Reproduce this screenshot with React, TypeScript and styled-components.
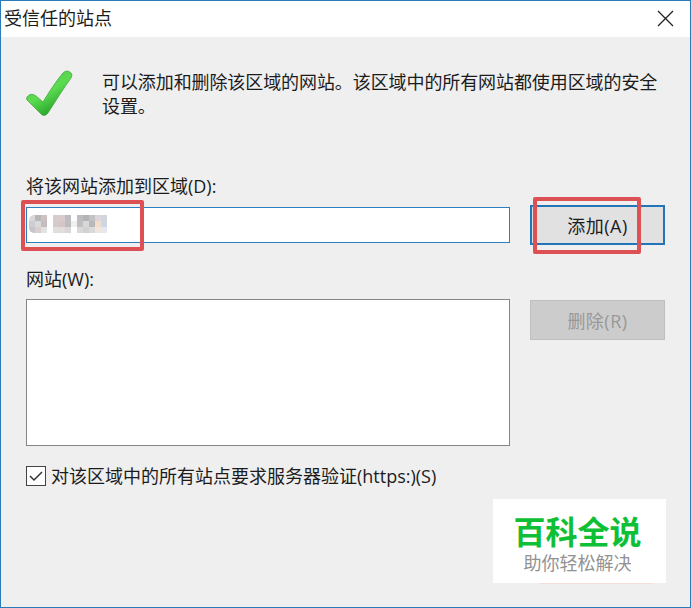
import React from 'react'
import styled, { createGlobalStyle } from 'styled-components'

interface ButtonProps {
  $primary?: boolean
}

interface MarkerProps {
  $left: number
  $top: number
  $width: number
  $height: number
}

const GlobalStyle = createGlobalStyle`
  * {
    box-sizing: border-box;
  }

  body {
    margin: 0;
    font-family: 'Open Sans', 'Noto Sans CJK SC', sans-serif;
    font-size: 18px;
    line-height: 24px;
    color: #1c1c1c;
  }
`

const Dialog = styled.div`
  position: relative;
  width: 691px;
  height: 608px;
  display: flex;
  flex-direction: column;
  background: #efefef;
  border: 1px solid #2b7bb9;
  overflow: hidden;
`

const TitleBar = styled.header`
  height: 36px;
  flex: none;
  display: flex;
  justify-content: space-between;
  align-items: center;
  padding: 0 16px 2px 3px;
  background: #fff;
`

const Title = styled.h1`
  margin: 0;
  font-size: 18px;
  font-weight: 400;
`

const CloseIcon = styled.svg`
  width: 17px;
  height: 17px;
`

const Content = styled.main`
  display: flex;
  flex-direction: column;
  padding: 33px 25px 0;
`

const Intro = styled.div`
  height: 104px;
  display: flex;
`

const CheckMark = styled.svg`
  width: 47px;
  height: 47px;
  margin-right: 29px;
`

const IntroText = styled.p`
  width: 562px;
  margin: 0;
  letter-spacing: -0.09px;
`

const Label = styled.label`
  height: 24px;
`

const FieldRow = styled.div`
  display: flex;
  gap: 20px;
  margin: 7px 0 22px;
`

const ListRow = styled.div`
  display: flex;
  gap: 20px;
  margin-top: 8px;
`

const Input = styled.div`
  width: 484px;
  height: 36px;
  margin-top: 2px;
  padding: 7px 2px;
  background: #fff;
  border: 1px solid #2b7fc0;
`

const Mosaic = styled.div`
  width: 78px;
  height: 18px;
  display: grid;
  grid-template-columns: repeat(13, 6px);
  grid-template-rows: repeat(3, 6px);
  border-radius: 5px 0 0 5px;
  overflow: hidden;
`

const MosaicCell = styled.span<{ $color: string }>`
  background: ${({ $color }) => $color};
`

const Button = styled.button<ButtonProps>`
  width: 135px;
  height: 40px;
  margin-top: ${({ $primary }) => ($primary ? 0 : '1px')};
  padding: 1px 0 0;
  font: inherit;
  letter-spacing: 0.5px;
  color: ${({ $primary }) => ($primary ? '#1c1c1c' : '#999')};
  background: ${({ $primary }) => ($primary ? '#e1e1e1' : '#ccc')};
  border: ${({ $primary }) => ($primary ? '2px solid #2474b8' : '1px solid #bfbfbf')};
`

const SiteList = styled.div`
  width: 484px;
  height: 147px;
  background: #fff;
  border: 1px solid #858585;
`

const CheckRow = styled.label`
  display: flex;
  align-items: center;
  gap: 5px;
  margin-top: 18px;
`

const CheckBox = styled.svg`
  width: 20px;
  height: 20px;
  background: #fff;
  border: 1px solid #444;
`

const Marker = styled.div<MarkerProps>`
  position: absolute;
  left: ${({ $left }) => $left}px;
  top: ${({ $top }) => $top}px;
  width: ${({ $width }) => $width}px;
  height: ${({ $height }) => $height}px;
  border: 4px solid #dd5054;
  border-radius: 2px;
`

const Watermark = styled.div`
  position: absolute;
  left: 492px;
  top: 498px;
  width: 173px;
  height: 84px;
  padding: 14px 4px 0 0;
  background: #fff;
  text-align: center;

  &::after {
    content: '';
    position: absolute;
    left: 47px;
    bottom: -1px;
    width: 113px;
    height: 1px;
    background: #f5ddd8;
  }
`

const Brand = styled.div`
  font-size: 32px;
  line-height: 38px;
  font-weight: 700;
  color: #0fbf35;
`

const Slogan = styled.div`
  font-size: 18px;
  line-height: 24px;
  color: #929292;
`

// blurred-out address, three rows of thirteen blocks
const mosaicRows = [
  ['#d9d9dc', '#b9b6b8', '#cfc0c1', '#fff', '#d6ccd0', '#d9cbcc', '#bcbcc2', '#fff', '#c0bcbf', '#b2b2b8', '#c2c2c5', '#dcd6da', '#d0d6de'],
  ['#cdcdd3', '#dadada', '#c6bdc0', '#fff', '#d2cccc', '#d8c4c4', '#bdbdbd', '#f0f0f0', '#bfbfc2', '#d8d8d8', '#b8b8bc', '#f2ddcd', '#cdd8e4'],
  ['#c5c5ca', '#d9cfcf', '#e2e2e2', '#fff', '#e2dede', '#e3dcdc', '#d8d8d8', '#fff', '#d9d9d9', '#d2d2d2', '#dadada', '#f0e6de', '#e4e9ef']
]

const App = () => {
  return (
    <>
      <GlobalStyle />
      <Dialog>
        <TitleBar>
          <Title>受信任的站点</Title>
          <CloseIcon viewBox="0 0 17 17" fill="none" stroke="#222" strokeWidth="1.3">
            <path d="M1 1 16 16M16 1 1 16" />
          </CloseIcon>
        </TitleBar>
        <Content>
          <Intro>
            <CheckMark viewBox="0 0 47 47">
              <defs>
                <linearGradient id="tick" x1="0" y1="0" x2="0.6" y2="1">
                  <stop offset="0" stopColor="#4fc247" />
                  <stop offset="0.55" stopColor="#5bdc50" />
                  <stop offset="1" stopColor="#219b24" />
                </linearGradient>
              </defs>
              <path
                d="M1 27Q5 22 10 26L17 32C23 22 31 10 37 3Q41 -1 45 3Q47 5 45 8C37 19 29 32 22 43Q18 48 14 43L1 30Q0 28 1 27Z"
                fill="url(#tick)"
                stroke="#47a844"
                strokeWidth="0.8"
              />
            </CheckMark>
            <IntroText>可以添加和删除该区域的网站。该区域中的所有网站都使用区域的安全设置。</IntroText>
          </Intro>
          <Label>将该网站添加到区域(D):</Label>
          <FieldRow>
            <Input>
              <Mosaic>
                {mosaicRows.flat().map((color, i) => <MosaicCell key={i} $color={color} />)}
              </Mosaic>
            </Input>
            <Button $primary>添加(A)</Button>
          </FieldRow>
          <Label>网站(W):</Label>
          <ListRow>
            <SiteList />
            <Button disabled>删除(R)</Button>
          </ListRow>
          <CheckRow>
            <CheckBox viewBox="0 0 18 18" fill="none" stroke="#333" strokeWidth="1.5">
              <path d="M3 9 7 13 15 5" />
            </CheckBox>
            <span>对该区域中的所有站点要求服务器验证(https:)(S)</span>
          </CheckRow>
        </Content>
        <Marker $left={20} $top={199} $width={123} $height={51} />
        <Marker $left={532} $top={196} $width={108} $height={57} />
        <Watermark>
          <Brand>百科全说</Brand>
          <Slogan>助你轻松解决</Slogan>
        </Watermark>
      </Dialog>
    </>
  )
}

export default App
